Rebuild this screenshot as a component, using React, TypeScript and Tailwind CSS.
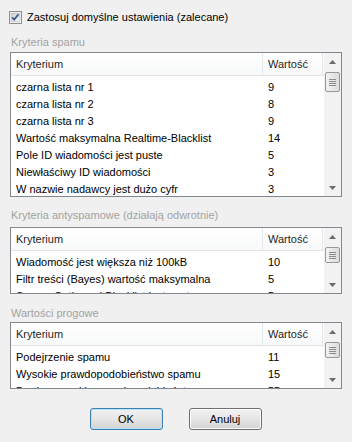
import React from 'react';

type Row = [string, string];

const SPAM_ROWS: Row[] = [
  ['czarna lista nr 1', '9'],
  ['czarna lista nr 2', '8'],
  ['czarna lista nr 3', '9'],
  ['Wartość maksymalna Realtime-Blacklist', '14'],
  ['Pole ID wiadomości jest puste', '5'],
  ['Niewłaściwy ID wiadomości', '3'],
  ['W nazwie nadawcy jest dużo cyfr', '3'],
  ['Temat zawiera dużo wykrzykników', '4'],
];

const ANTISPAM_ROWS: Row[] = [
  ['Wiadomość jest większa niż 100kB', '10'],
  ['Filtr treści (Bayes) wartość maksymalna', '5'],
  ['Serwer Outbound Blacklist jest puste', '5'],
];

const THRESHOLD_ROWS: Row[] = [
  ['Podejrzenie spamu', '11'],
  ['Wysokie prawdopodobieństwo spamu', '15'],
  ['Bardzo wysokie prawdopodobieństwo spamu', '55'],
];

function Arrow({ down }: { down?: boolean }) {
  return (
    <div className="flex h-[17px] shrink-0 items-center justify-center">
      <svg width="7" height="4" viewBox="0 0 7 4">
        {down ? <path d="M0 0h7L3.5 4z" fill="#6b6b6b" /> : <path d="M0 4h7L3.5 0z" fill="#6b6b6b" />}
      </svg>
    </div>
  );
}

function Scrollbar({ thumb }: { thumb: string }) {
  return (
    <div className="flex w-[17px] shrink-0 flex-col bg-[#f2f2f2]">
      <Arrow />
      <div className="flex flex-1 flex-col px-px">
        <div
          className={`flex flex-col items-center justify-center gap-px rounded-[2px] border border-[#989898] bg-gradient-to-r from-[#f3f3f3] to-[#dcdcdc] ${thumb}`}
        >
          <div className="h-px w-[7px] bg-[#8c8c8c]" />
          <div className="h-px w-[7px] bg-[#8c8c8c]" />
          <div className="h-px w-[7px] bg-[#8c8c8c]" />
          <div className="h-px w-[7px] bg-[#8c8c8c]" />
        </div>
      </div>
      <Arrow down />
    </div>
  );
}

function ListView({ rows, height, thumb }: { rows: Row[]; height: string; thumb: string }) {
  return (
    <div className={`flex overflow-hidden border border-[#828790] bg-white ${height}`}>
      <div className="flex min-w-0 flex-1 flex-col">
        <div className="flex h-[23px] shrink-0 border-b border-[#e3e3e3] bg-gradient-to-b from-white to-[#f8f9fa] text-[#1e1e1e]">
          <div className="flex w-[252px] items-center border-r border-[#e3e6ea] pl-[5px]">Kryterium</div>
          <div className="flex w-[60px] items-center border-r border-[#e3e6ea] pl-[5px]">Wartość</div>
        </div>
        <div className="flex flex-col pt-[2px]">
          {rows.map(([name, value]) => (
            <div key={name} className="flex h-[17px] shrink-0 items-center">
              <div className="w-[252px] whitespace-nowrap pl-[5px]">{name}</div>
              <div className="w-[60px] pl-[5px]">{value}</div>
            </div>
          ))}
        </div>
      </div>
      <Scrollbar thumb={thumb} />
    </div>
  );
}

export default function App() {
  return (
    <div className="flex h-[442px] w-[352px] flex-col bg-[#f0f0f0] px-[10px] font-['Liberation_Sans',Arial,sans-serif] text-[11px] leading-[14px] text-black">
      {/* default settings checkbox */}
      <label className="mt-[10px] flex h-[14px] items-center gap-[4px] -ml-px">
        <svg width="13" height="13" viewBox="0 0 13 13">
          <defs>
            <linearGradient id="cb" x1="0" y1="0" x2="1" y2="1">
              <stop offset="0" stopColor="#cbcfd5" />
              <stop offset="1" stopColor="#f6f6f6" />
            </linearGradient>
          </defs>
          <rect x="0.5" y="0.5" width="12" height="12" fill="#fff" stroke="#8e8f8f" />
          <rect x="2" y="2" width="9" height="9" fill="url(#cb)" stroke="#aeb3b9" strokeWidth="0.6" />
          <path d="M3.2 6.4l2 2.2 4.3-5.4" fill="none" stroke="#3f5a8a" strokeWidth="1.8" />
        </svg>
        <span className="ml-px">Zastosuj domyślne ustawienia (zalecane)</span>
      </label>

      <div className="mt-[11px] h-[14px] pl-px text-[#a3a3a3]">Kryteria spamu</div>
      <div className="mt-[3px]">
        <ListView rows={SPAM_ROWS} height="h-[145px]" thumb="mt-[2px] h-[20px]" />
      </div>

      <div className="mt-[11px] h-[14px] pl-px text-[#a3a3a3]">Kryteria antyspamowe (działają odwrotnie)</div>
      <div className="mt-[5px]">
        <ListView rows={ANTISPAM_ROWS} height="h-[67px]" thumb="mt-[2px] h-[16px]" />
      </div>

      <div className="mt-[12px] h-[14px] pl-px text-[#a3a3a3]">Wartości progowe</div>
      <div className="mt-[2px]">
        <ListView rows={THRESHOLD_ROWS} height="h-[67px]" thumb="mt-[2px] h-[16px]" />
      </div>

      <div className="mt-[19px] flex justify-center gap-[26px] pr-px">
        <button className="flex h-[22px] w-[73px] items-center justify-center rounded-[3px] border border-[#3c7fb1] bg-gradient-to-b from-[#f2f2f2] via-[#e6e6e6] to-[#d3d3d3] shadow-[inset_0_0_0_1px_#b7e4fb]">
          OK
        </button>
        <button className="flex h-[22px] w-[73px] items-center justify-center rounded-[3px] border border-[#707070] bg-gradient-to-b from-[#f2f2f2] via-[#e6e6e6] to-[#d3d3d3] shadow-[inset_0_0_0_1px_#fcfcfc]">
          Anuluj
        </button>
      </div>
    </div>
  );
}
